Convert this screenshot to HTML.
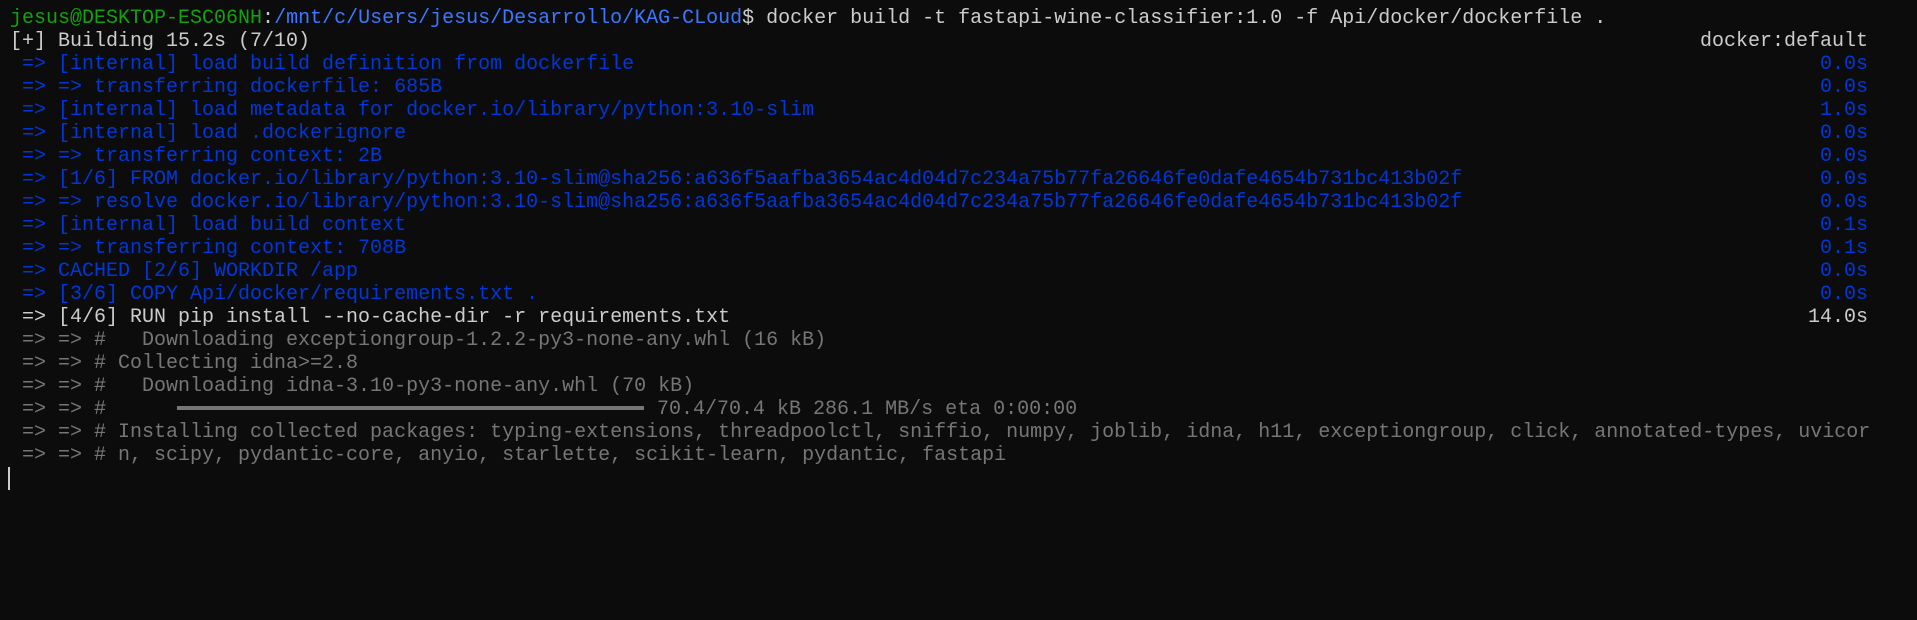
<!DOCTYPE html>
<html><head><meta charset="utf-8"><style>
html,body{margin:0;padding:0;background:#0c0c0c;width:1917px;height:620px;overflow:hidden}
#t{position:absolute;left:10px;top:7px;right:0;font-family:"Liberation Mono",monospace;font-size:20px;line-height:23px;color:#cccccc}
.l{position:relative;height:23px;white-space:pre}
.r{position:absolute;right:49px;top:0}
.g{color:#13a10e}.p{color:#3b78ff}.b{color:#0037da}.d{color:#767676}.w{color:#cccccc}
.bar{display:inline-block;width:467px;height:4px;background:#767676;vertical-align:middle;margin-left:11px;margin-right:13px;position:relative;top:-1px}
#cur{position:absolute;left:8px;top:467px;width:2px;height:23px;background:#cccccc}
</style></head><body>
<div id="t"><div class="l"><span class="g">jesus@DESKTOP-ESC06NH</span>:<span class="p">/mnt/c/Users/jesus/Desarrollo/KAG-CLoud</span>$ docker build -t fastapi-wine-classifier:1.0 -f Api/docker/dockerfile .</div><div class="l">[+] Building 15.2s (7/10)<span class="r">docker:default</span></div><div class="l b"> => [internal] load build definition from dockerfile<span class="r">0.0s</span></div><div class="l b"> => => transferring dockerfile: 685B<span class="r">0.0s</span></div><div class="l b"> => [internal] load metadata for docker.io/library/python:3.10-slim<span class="r">1.0s</span></div><div class="l b"> => [internal] load .dockerignore<span class="r">0.0s</span></div><div class="l b"> => => transferring context: 2B<span class="r">0.0s</span></div><div class="l b"> => [1/6] FROM docker.io/library/python:3.10-slim@sha256:a636f5aafba3654ac4d04d7c234a75b77fa26646fe0dafe4654b731bc413b02f<span class="r">0.0s</span></div><div class="l b"> => => resolve docker.io/library/python:3.10-slim@sha256:a636f5aafba3654ac4d04d7c234a75b77fa26646fe0dafe4654b731bc413b02f<span class="r">0.0s</span></div><div class="l b"> => [internal] load build context<span class="r">0.1s</span></div><div class="l b"> => => transferring context: 708B<span class="r">0.1s</span></div><div class="l b"> => CACHED [2/6] WORKDIR /app<span class="r">0.0s</span></div><div class="l b"> => [3/6] COPY Api/docker/requirements.txt .<span class="r">0.0s</span></div><div class="l w"> => [4/6] RUN pip install --no-cache-dir -r requirements.txt<span class="r">14.0s</span></div><div class="l d"> => => #   Downloading exceptiongroup-1.2.2-py3-none-any.whl (16 kB)</div><div class="l d"> => => # Collecting idna>=2.8</div><div class="l d"> => => #   Downloading idna-3.10-py3-none-any.whl (70 kB)</div><div class="l d"> => => #     <span class="bar"></span>70.4/70.4 kB 286.1 MB/s eta 0:00:00</div><div class="l d"> => => # Installing collected packages: typing-extensions, threadpoolctl, sniffio, numpy, joblib, idna, h11, exceptiongroup, click, annotated-types, uvicor</div><div class="l d"> => => # n, scipy, pydantic-core, anyio, starlette, scikit-learn, pydantic, fastapi</div></div>
<div id="cur"></div>
</body></html>
